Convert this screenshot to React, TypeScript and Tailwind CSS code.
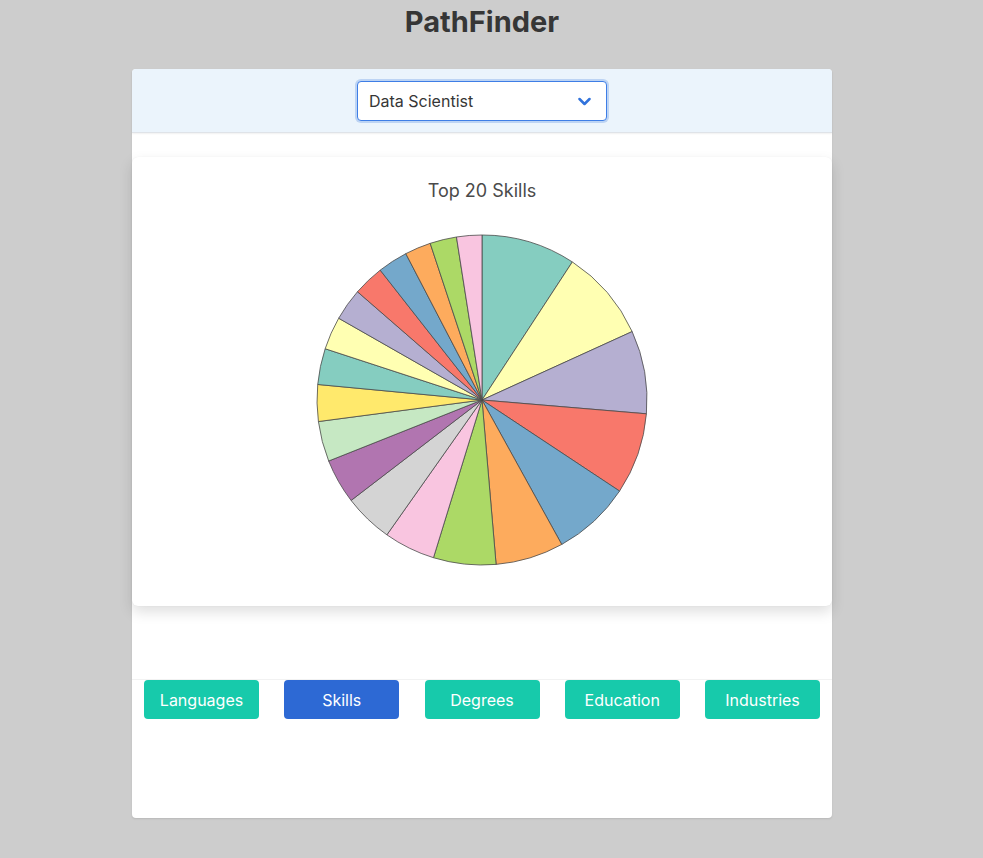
import React from "react";

const bounds = [0, 33.2, 65.5, 94.8, 123.5, 151.1, 175.1, 197.1, 215.2, 232.5, 248.3, 262.5, 275.4, 288.1, 299.7, 311, 321.9, 332.5, 341.7, 351.1, 360];
const colors = [
  "#85cdc0", "#ffffb2", "#b5afd1", "#f8786b", "#74a8cb", "#fdab5d", "#acd966", "#f9c5e0", "#d4d4d4", "#b175b0",
  "#c6e8c3", "#ffe96c", "#85cdc0", "#ffffb2", "#b5afd1", "#f8786b", "#74a8cb", "#fdab5d", "#acd966", "#f9c5e0",
];

function Pie() {
  const cx = 166;
  const cy = 166;
  const r = 165;
  const pt = (a: number) => {
    const rad = (a * Math.PI) / 180;
    return [cx + r * Math.sin(rad), cy - r * Math.cos(rad)];
  };
  return (
    <svg width="332" height="332" viewBox="0 0 332 332">
      {colors.map((c, i) => {
        const a0 = bounds[i];
        const a1 = bounds[i + 1];
        const [x0, y0] = pt(a0);
        const [x1, y1] = pt(a1);
        const large = a1 - a0 > 180 ? 1 : 0;
        return (
          <path
            key={i}
            d={`M${cx},${cy} L${x0},${y0} A${r},${r} 0 ${large} 1 ${x1},${y1} Z`}
            fill={c}
            stroke="#4a4a4a"
            strokeWidth={0.8}
          />
        );
      })}
    </svg>
  );
}

const tabs = ["Languages", "Skills", "Degrees", "Education", "Industries"];

export default function App() {
  return (
    <div className="min-h-[858px] bg-[#cdcdcd] font-['Inter','Noto_Sans',sans-serif] pb-[40px]">
      <div className="w-[964px]">
        <div className="h-[69px] flex justify-center pt-[4px]">
          <h1 className="text-[29px] leading-[36px] font-bold text-[#363636]">PathFinder</h1>
        </div>
        <div className="w-[700px] mx-auto bg-white rounded-[4px] shadow-[0_1px_2px_rgba(0,0,0,0.1)] flex flex-col h-[749px]">
          <div className="h-[64px] bg-[#ebf4fc] rounded-t-[4px] border-b border-[#dfe3e8] shadow-[0_1px_2px_rgba(0,0,0,0.06)] flex justify-center pt-[12px]">
            <div className="w-[250px] h-[40px] bg-white border border-[#3e7ee6] rounded-[4px] shadow-[0_0_0_2px_rgba(50,115,220,0.25)] flex items-center justify-between pl-[11px] pr-[15px]">
              <span className="text-[16px] text-[#363636]">Data Scientist</span>
              <svg width="13" height="9" viewBox="0 0 13 9">
                <path d="M1.5 2 L6.5 7 L11.5 2" fill="none" stroke="#3273dc" strokeWidth="2.5" strokeLinecap="round" strokeLinejoin="round" />
              </svg>
            </div>
          </div>
          <div className="mt-[24px] h-[449px] bg-white rounded-[6px] shadow-[0_6px_14px_rgba(0,0,0,0.13),0_0_1px_rgba(0,0,0,0.08)] flex flex-col items-center">
            <div className="mt-[20px] text-[18px] leading-[27px] text-[#4a4a4a]">Top 20 Skills</div>
            <div className="mt-[30px]">
              <Pie />
            </div>
          </div>
          <div className="mt-[73px] border-t border-[#f2f2f2] flex justify-between px-[12px]">
            {tabs.map((t) => (
              <button
                key={t}
                className={`w-[115px] h-[39px] rounded-[4px] text-white text-[16px] ${t === "Skills" ? "bg-[#2d69d4]" : "bg-[#17caab]"}`}
              >
                {t}
              </button>
            ))}
          </div>
        </div>
      </div>
    </div>
  );
}
